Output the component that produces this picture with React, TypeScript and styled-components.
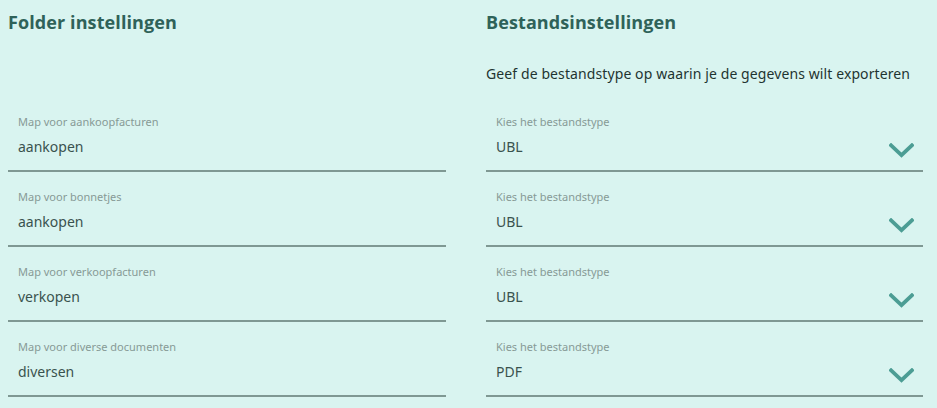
import React from 'react'
import styled, { createGlobalStyle } from 'styled-components'

const GlobalStyle = createGlobalStyle`
    html, body {
        margin: 0;
        padding: 0;
        background: #d9f4f0;
    }
    body {
        font-family: "Noto Sans", "Open Sans", sans-serif;
    }
`

interface FolderField {
    label: string
    value: string
}

const folders: FolderField[] = [
    { label: 'Map voor aankoopfacturen', value: 'aankopen' },
    { label: 'Map voor bonnetjes', value: 'aankopen' },
    { label: 'Map voor verkoopfacturen', value: 'verkopen' },
    { label: 'Map voor diverse documenten', value: 'diversen' },
]

const fileTypes = ['UBL', 'UBL', 'UBL', 'PDF']

const Chevron: React.FC = () => (
    <ChevronIcon viewBox="0 0 24 14" aria-hidden="true">
        <path d="M2 2 L12 11.5 L22 2" />
    </ChevronIcon>
)

const App: React.FC = () => {
    return (
        <Page>
            <GlobalStyle />
            <Column>
                <Heading>Folder instellingen</Heading>
                <Intro />
                {folders.map((field, i) => (
                    <Field key={i}>
                        <Label>{field.label}</Label>
                        <Value>{field.value}</Value>
                    </Field>
                ))}
            </Column>

            <Column>
                <Heading>Bestandsinstellingen</Heading>
                <Intro>Geef de bestandstype op waarin je de gegevens wilt exporteren</Intro>
                {fileTypes.map((type, i) => (
                    <Field key={i}>
                        <Label>Kies het bestandstype</Label>
                        <SelectRow>
                            <Value>{type}</Value>
                            <Chevron />
                        </SelectRow>
                    </Field>
                ))}
            </Column>
        </Page>
    )
}

export default App

const Page = styled.div`
    display: grid;
    grid-template-columns: 438px 437px;
    column-gap: 40px;
    padding: 10px 14px 0 8px;
    height: 408px;
    box-sizing: border-box;
    overflow: hidden;
`

const Column = styled.section`
    display: flex;
    flex-direction: column;
`

const Heading = styled.h2`
    margin: 0;
    font-family: "Open Sans", sans-serif;
    font-size: 18px;
    font-weight: 700;
    line-height: 24px;
    color: #2f6259;
    letter-spacing: 0.1px;
`

const Intro = styled.p`
    margin: 0;
    height: 63px;
    padding-top: 30px;
    box-sizing: border-box;
    font-size: 14px;
    line-height: 20px;
    letter-spacing: 0.1px;
    color: #1f3431;
`

const Field = styled.div`
    height: 75px;
    box-sizing: border-box;
    padding: 17px 10px 0;
    border-bottom: 2px solid #7f9893;
    display: flex;
    flex-direction: column;
`

const Label = styled.span`
    font-size: 11px;
    line-height: 16px;
    color: #879a96;
`

const Value = styled.span`
    margin-top: 7px;
    font-size: 14px;
    line-height: 20px;
    color: #3a524e;
`

const SelectRow = styled.div`
    display: flex;
    align-items: flex-end;
    justify-content: space-between;
`

const ChevronIcon = styled.svg`
    width: 25px;
    height: 15px;
    margin-right: -1px;
    margin-bottom: -1px;

    path {
        fill: none;
        stroke: #4c9d94;
        stroke-width: 3.6;
        stroke-linecap: square;
    }
`
